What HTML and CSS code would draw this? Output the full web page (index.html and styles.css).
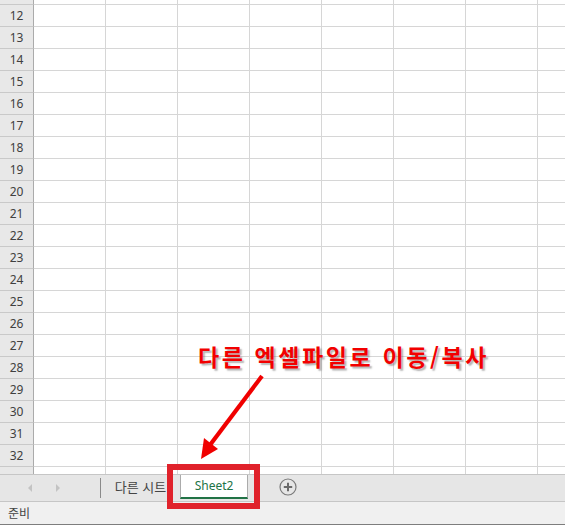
FILE: index.html
```html
<!DOCTYPE html>
<html lang="ko">
<head>
<meta charset="utf-8">
<link rel="stylesheet" href="styles.css">
</head>
<body>
<div class="app">
  <div class="sheet">
    <div class="rows">
      <div class="row"><div class="rh"></div><div class="cells"></div></div>
      <div class="row"><div class="rh">12</div><div class="cells"></div></div>
      <div class="row"><div class="rh">13</div><div class="cells"></div></div>
      <div class="row"><div class="rh">14</div><div class="cells"></div></div>
      <div class="row"><div class="rh">15</div><div class="cells"></div></div>
      <div class="row"><div class="rh">16</div><div class="cells"></div></div>
      <div class="row"><div class="rh">17</div><div class="cells"></div></div>
      <div class="row"><div class="rh">18</div><div class="cells"></div></div>
      <div class="row"><div class="rh">19</div><div class="cells"></div></div>
      <div class="row"><div class="rh">20</div><div class="cells"></div></div>
      <div class="row"><div class="rh">21</div><div class="cells"></div></div>
      <div class="row"><div class="rh">22</div><div class="cells"></div></div>
      <div class="row"><div class="rh">23</div><div class="cells"></div></div>
      <div class="row"><div class="rh">24</div><div class="cells"></div></div>
      <div class="row"><div class="rh">25</div><div class="cells"></div></div>
      <div class="row"><div class="rh">26</div><div class="cells"></div></div>
      <div class="row"><div class="rh">27</div><div class="cells"></div></div>
      <div class="row"><div class="rh">28</div><div class="cells"></div></div>
      <div class="row"><div class="rh">29</div><div class="cells"></div></div>
      <div class="row"><div class="rh">30</div><div class="cells"></div></div>
      <div class="row"><div class="rh">31</div><div class="cells"></div></div>
      <div class="row"><div class="rh">32</div><div class="cells"></div></div>
      <div class="row"><div class="rh"></div><div class="cells"></div></div>
    </div>
  </div>

  <div class="tabbar">
    <div class="nav">
      <svg class="arrow" width="4" height="8" viewBox="0 0 4 8"><path d="M4 0 L0 4 L4 8 Z" fill="#c3c3c3"/></svg>
      <svg class="arrow" width="4" height="8" viewBox="0 0 4 8"><path d="M0 0 L4 4 L0 8 Z" fill="#c3c3c3"/></svg>
    </div>
    <div class="sep"></div>
    <div class="tab">다른 시트</div>
    <div class="tab active">Sheet2</div>
    <div class="add">
      <svg width="18" height="18" viewBox="0 0 18 18">
        <circle cx="9" cy="9" r="8" fill="none" stroke="#7a7a7a" stroke-width="1.2"/>
        <path d="M9 4.8 V13.2 M4.8 9 H13.2" stroke="#6a6a6a" stroke-width="2"/>
      </svg>
    </div>
  </div>

  <div class="status">준비</div>

  <div class="note">다른 엑셀파일로 이동/복사</div>
  <svg class="pointer" width="80" height="100" viewBox="0 0 80 100">
    <path d="M74 8 L22 77" stroke="#f00000" stroke-width="4.2" fill="none"/>
    <path d="M13 91 L16 70 L30 81 Z" fill="#f00000"/>
  </svg>
  <div class="highlight"></div>
</div>
</body>
</html>
```
FILE: styles.css
```css
html, body {
  margin: 0;
  padding: 0;
  background: #ffffff;
}

.app {
  position: relative;
  width: 565px;
  height: 525px;
  overflow: hidden;
  font-family: "Noto Sans", "Noto Sans CJK KR", sans-serif;
  color: #444444;
}

.sheet {
  height: 474px;
  overflow: hidden;
}

.rows {
  margin-top: -17px;
}

.row {
  display: flex;
  height: 22px;
}

.rh {
  box-sizing: border-box;
  width: 34px;
  flex: none;
  height: 22px;
  background: #e8e8e8;
  border-right: 1px solid #ababab;
  border-bottom: 1px solid #c9c9c9;
  font-size: 12px;
  line-height: 21px;
  text-align: center;
  color: #404040;
}

.cells {
  flex: 1;
  box-sizing: border-box;
  height: 22px;
  border-bottom: 1px solid #d6d6d6;
  background-image: linear-gradient(to right, transparent 71px, #d6d6d6 71px);
  background-size: 72px 100%;
}

.tabbar {
  box-sizing: border-box;
  height: 28px;
  display: flex;
  align-items: flex-start;
  background: #e6e6e6;
  border-top: 1px solid #c6c6c6;
  border-bottom: 1px solid #c6c6c6;
}

.nav {
  width: 100px;
  height: 26px;
  box-sizing: border-box;
  padding-left: 28px;
  display: flex;
  align-items: center;
  gap: 24px;
}

.arrow {
  display: block;
}

.sep {
  width: 1px;
  height: 20px;
  margin-top: 3px;
  background: #8a8a8a;
}

.tab {
  box-sizing: border-box;
  width: 79px;
  height: 24px;
  font-family: "Noto Sans CJK KR", sans-serif;
  font-size: 13px;
  line-height: 24px;
  text-align: center;
  color: #444444;
}

.tab.active {
  width: 68px;
  background: #ffffff;
  border-left: 1px solid #ababab;
  border-right: 1px solid #ababab;
  border-bottom: 2px solid #217346;
  font-family: "Noto Sans", sans-serif;
  font-size: 12px;
  line-height: 22px;
  color: #217346;
}

.add {
  margin-left: 31px;
  margin-top: 3px;
  width: 18px;
  height: 18px;
}

.add svg {
  display: block;
}

.status {
  box-sizing: border-box;
  height: 23px;
  padding-left: 8px;
  background: #f0f0f0;
  border-bottom: 1px solid #7d7d7d;
  font-family: "Noto Sans CJK KR", sans-serif;
  font-size: 12px;
  line-height: 22px;
  color: #444444;
}

.note {
  position: absolute;
  left: 198px;
  top: 345px;
  font-family: "Noto Sans CJK KR", sans-serif;
  font-weight: 700;
  font-size: 23px;
  line-height: 23px;
  letter-spacing: 2.6px;
  white-space: nowrap;
  color: #f20000;
  text-shadow: 2px 2px 1.5px rgba(90, 90, 90, 0.45);
}

.pointer {
  position: absolute;
  left: 188px;
  top: 368px;
}

.highlight {
  position: absolute;
  left: 167px;
  top: 464px;
  width: 93px;
  height: 45px;
  box-sizing: border-box;
  border: 6px solid #e0222b;
}
```
